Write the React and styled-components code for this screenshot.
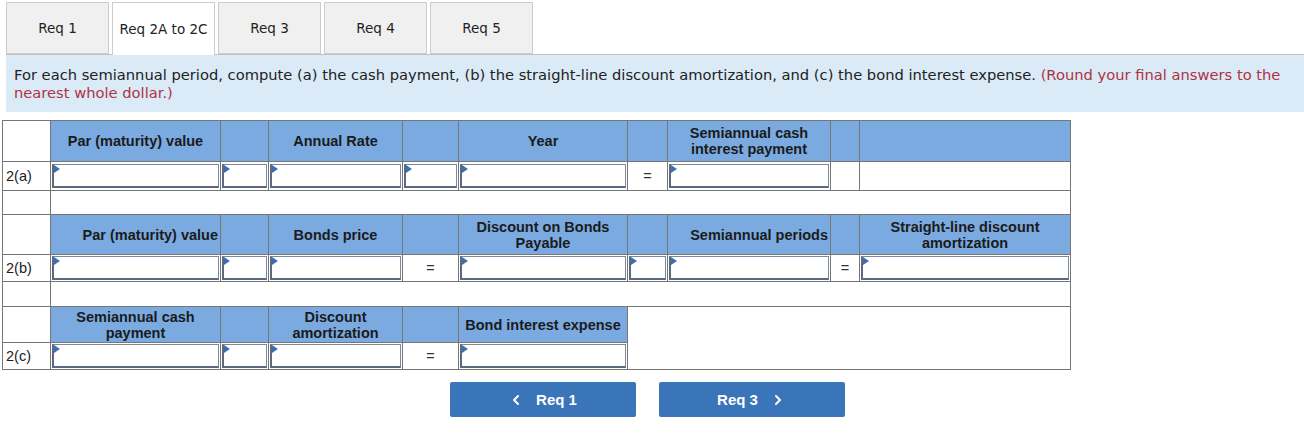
import React from "react";
import styled, { createGlobalStyle } from "styled-components";
import { ChevronLeft, ChevronRight } from "lucide-react";

const GlobalStyle = createGlobalStyle`
  body {
    margin: 0;
    background: #fff;
    font-family: "Liberation Sans", Arial, sans-serif;
  }
`;

const tabs = ["Req 1", "Req 2A to 2C", "Req 3", "Req 4", "Req 5"];

function InputCell() {
  return (
    <InCell>
      <Field>
        <Marker />
      </Field>
    </InCell>
  );
}

function App() {
  return (
    <Page>
      <GlobalStyle />
      <TabBar>
        {tabs.map((t, i) => (
          <Tab key={t} $active={i === 1}>
            {t}
          </Tab>
        ))}
      </TabBar>

      <Instructions>
        For each semiannual period, compute (a) the cash payment, (b) the
        straight-line discount amortization, and (c) the bond interest expense.{" "}
        <Note>(Round your final answers to the nearest whole dollar.)</Note>
      </Instructions>

      <Grid>
        <colgroup>
          <col style={{ width: 48 }} />
          <col style={{ width: 170 }} />
          <col style={{ width: 48 }} />
          <col style={{ width: 134 }} />
          <col style={{ width: 56 }} />
          <col style={{ width: 169 }} />
          <col style={{ width: 40 }} />
          <col style={{ width: 163 }} />
          <col style={{ width: 29 }} />
          <col style={{ width: 211 }} />
        </colgroup>
        <tbody>
          {/* 2(a) */}
          <HeadRow $h={41}>
            <Label />
            <Head>Par (maturity) value</Head>
            <Head />
            <Head>Annual Rate</Head>
            <Head />
            <Head>Year</Head>
            <Head />
            <Head>
              Semiannual cash
              <br />
              interest payment
            </Head>
            <Head />
            <Head />
          </HeadRow>
          <InRow $h={29}>
            <Label>2(a)</Label>
            <InputCell />
            <InputCell />
            <InputCell />
            <InputCell />
            <InputCell />
            <Op>=</Op>
            <InputCell />
            <Blank />
            <Blank />
          </InRow>
          <Spacer $h={24}>
            <Label />
            <Blank colSpan={9} />
          </Spacer>

          {/* 2(b) */}
          <HeadRow $h={40}>
            <Label />
            <Head $align="right">Par (maturity) value</Head>
            <Head />
            <Head>Bonds price</Head>
            <Head />
            <Head>
              Discount on Bonds
              <br />
              Payable
            </Head>
            <Head />
            <Head $align="right">Semiannual periods</Head>
            <Head />
            <Head>
              Straight-line discount
              <br />
              amortization
            </Head>
          </HeadRow>
          <InRow $h={27}>
            <Label>2(b)</Label>
            <InputCell />
            <InputCell />
            <InputCell />
            <Op>=</Op>
            <InputCell />
            <InputCell />
            <InputCell />
            <Op>=</Op>
            <InputCell />
          </InRow>
          <Spacer $h={25}>
            <Label />
            <Blank colSpan={9} />
          </Spacer>

          {/* 2(c) */}
          <HeadRow $h={36}>
            <Label />
            <Head>
              Semiannual cash
              <br />
              payment
            </Head>
            <Head />
            <Head>
              Discount
              <br />
              amortization
            </Head>
            <Head />
            <Head>Bond interest expense</Head>
            <Blank colSpan={4} rowSpan={2} />
          </HeadRow>
          <InRow $h={27}>
            <Label>2(c)</Label>
            <InputCell />
            <InputCell />
            <InputCell />
            <Op>=</Op>
            <InputCell />
          </InRow>
        </tbody>
      </Grid>

      <Nav>
        <NavButton>
          <ChevronLeft size={16} strokeWidth={3} />
          <span>Req 1</span>
        </NavButton>
        <NavButton>
          <span>Req 3</span>
          <ChevronRight size={16} strokeWidth={3} />
        </NavButton>
      </Nav>
    </Page>
  );
}

const Page = styled.div`
  width: 1304px;
  padding-top: 2px;
`;

const TabBar = styled.div`
  display: flex;
  gap: 3px;
  margin-left: 6px;
  height: 52px;
  border-bottom: 1px solid #c2c2c2;
`;

const Tab = styled.div`
  width: 103px;
  height: ${(p) => (p.$active ? "53px" : "52px")};
  box-sizing: border-box;
  display: flex;
  align-items: center;
  justify-content: center;
  background: ${(p) => (p.$active ? "#ffffff" : "#f0f0f0")};
  border: 1px solid #cdcdcd;
  border-bottom: ${(p) => (p.$active ? "none" : "1px solid #cdcdcd")};
  font-family: "DejaVu Sans", Verdana, sans-serif;
  font-size: 13.5px;
  color: #222;
  position: relative;
  z-index: 1;
`;

const Instructions = styled.div`
  margin-left: 6px;
  background: #dbeaf7;
  padding: 11px 8px 10px 8px;
  font-family: "DejaVu Sans", Verdana, sans-serif;
  font-size: 14.7px;
  line-height: 18px;
  color: #222;
`;

const Note = styled.span`
  color: #b03244;
`;

const Grid = styled.table`
  margin: 8px 0 0 2px;
  border-collapse: collapse;
  table-layout: fixed;
  width: 1068px;
  font-size: 14.5px;
  color: #1b1b1b;

  td {
    border: 1px solid #767676;
    padding: 0;
  }
`;

const HeadRow = styled.tr`
  height: ${(p) => p.$h}px;
`;

const InRow = styled.tr`
  height: ${(p) => p.$h}px;
`;

const Spacer = styled.tr`
  height: ${(p) => p.$h}px;
`;

const Label = styled.td`
  background: #fff;
  padding-left: 3px !important;
  font-size: 14.5px;
  vertical-align: middle;
`;

const Head = styled.td`
  background: #7aaae0;
  font-weight: bold;
  text-align: ${(p) => p.$align || "center"};
  line-height: 16px;
  padding: 0 2px !important;
  white-space: nowrap;
`;

const Blank = styled.td`
  background: #fff;
`;

const Op = styled.td`
  background: #fff;
  text-align: center;
  color: #333;
`;

const InCell = styled.td`
  background: #fff;
  padding: 1px !important;
  vertical-align: middle;
`;

const Field = styled.div`
  position: relative;
  height: 24px;
  box-sizing: border-box;
  border: 1px solid #7c8797;
  border-left: 2px solid #5b6a80;
  border-bottom: 2px solid #5b6a80;
  background: #fff;
`;

const Marker = styled.span`
  position: absolute;
  left: 0;
  top: 0;
  width: 0;
  height: 0;
  border-top: 4px solid transparent;
  border-bottom: 4px solid transparent;
  border-left: 6px solid #3d6fae;
`;

const Nav = styled.div`
  display: flex;
  justify-content: center;
  gap: 23px;
  margin-top: 12px;
  padding-right: 10px;
`;

const NavButton = styled.button`
  width: 186px;
  height: 35px;
  display: flex;
  align-items: center;
  justify-content: center;
  gap: 12px;
  background: #3a74b9;
  border: none;
  border-radius: 2px;
  color: #fff;
  font-family: "Liberation Sans", Arial, sans-serif;
  font-weight: bold;
  font-size: 15px;
  cursor: pointer;
`;

export default App;
